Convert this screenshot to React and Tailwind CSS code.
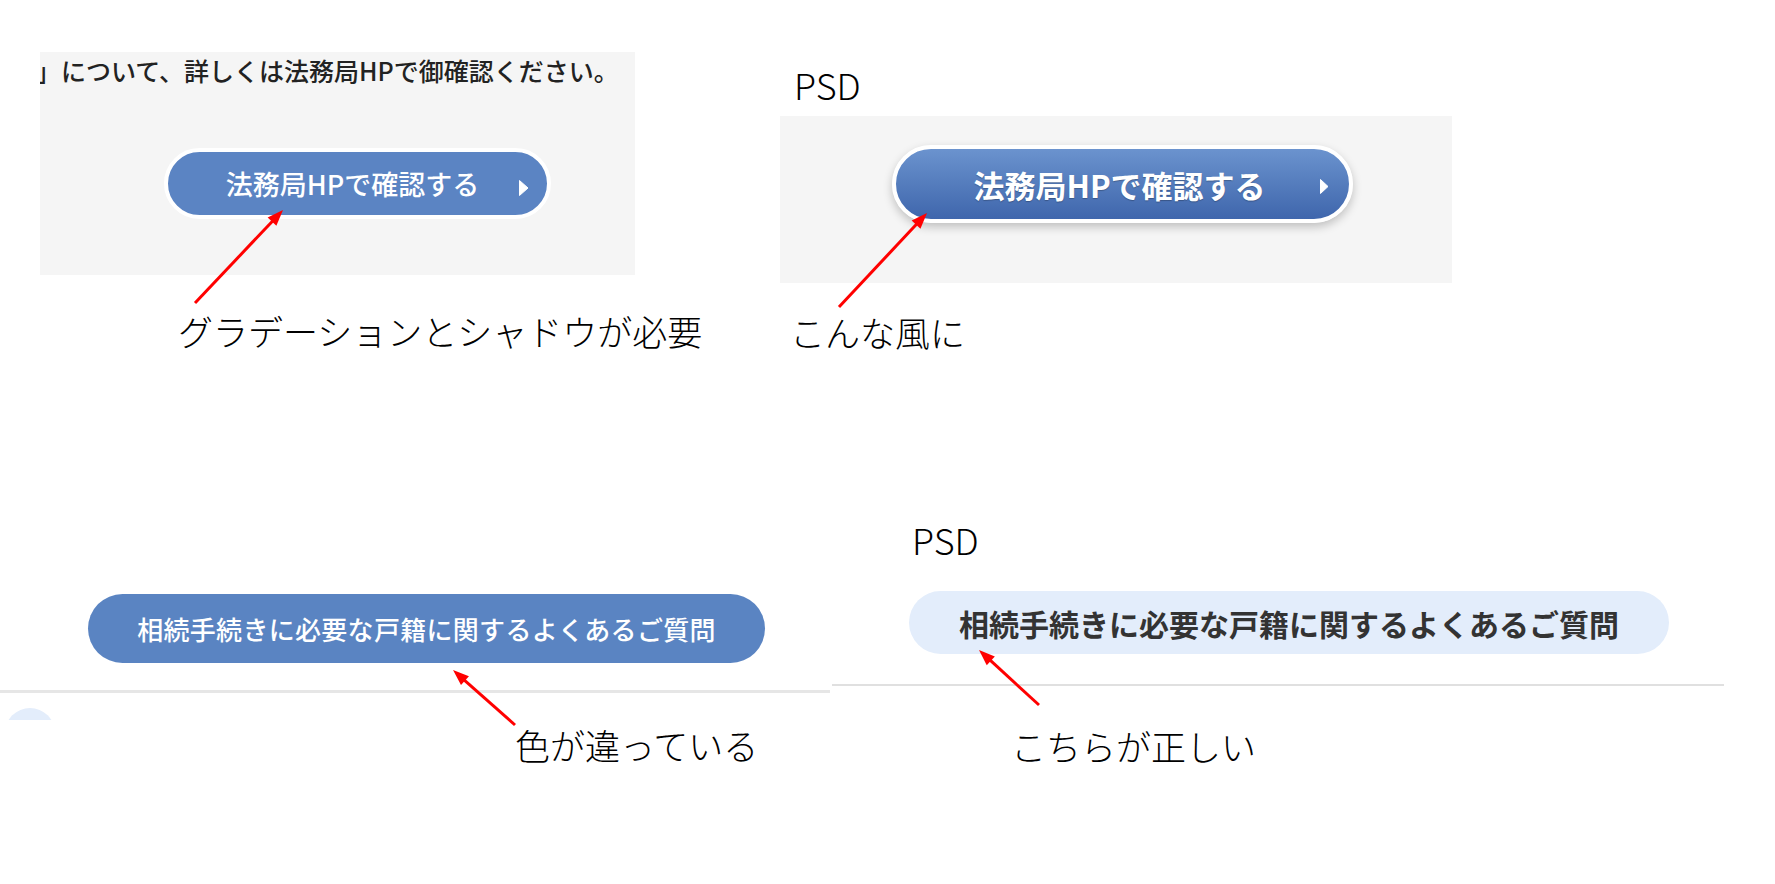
const jp = "font-['Noto_Sans_CJK_JP','Noto_Sans',sans-serif]";

function Arrow({ x1, y1, x2, y2 }) {
  const dx = x2 - x1;
  const dy = y2 - y1;
  const len = Math.hypot(dx, dy);
  const ux = dx / len;
  const uy = dy / len;
  const hl = 16;
  const hw = 6;
  const bx = x2 - ux * hl;
  const by = y2 - uy * hl;
  const pts = `${x2},${y2} ${bx - uy * hw},${by + ux * hw} ${bx + uy * hw},${by - ux * hw}`;
  return (
    <g>
      <line x1={x1} y1={y1} x2={bx + ux * 2} y2={by + uy * 2} stroke="#ff0000" strokeWidth="3" />
      <polygon points={pts} fill="#ff0000" />
    </g>
  );
}

function Caret({ w, h }) {
  return (
    <svg width={w} height={h} viewBox={`0 0 ${w} ${h}`}>
      <path d={`M0.5 0.5 L${w} ${h / 2} L0.5 ${h - 0.5} Z`} fill="white" strokeLinejoin="round" stroke="white" strokeWidth="1" />
    </svg>
  );
}

// 注釈テキスト（細いゴシック）
function Note({ className, children }) {
  return (
    <div className={`absolute whitespace-nowrap text-[35px] font-light leading-none text-black ${jp} ${className}`}>
      {children}
    </div>
  );
}

export default function App() {
  return (
    <div className={`relative h-[884px] w-[1775px] overflow-hidden bg-white ${jp}`}>
      {/* 左上：現状のスクショ */}
      <div className="absolute left-[40px] top-[52px] flex h-[223px] w-[595px] flex-col overflow-hidden bg-[#f5f5f5] pt-[6px]">
        <p className="ml-[-4px] shrink-0 whitespace-nowrap text-[25px] font-medium leading-[25px] text-[#222]">
          」について、詳しくは法務局HPで御確認ください。
        </p>
        <div className="relative ml-[124px] mt-[65px] flex h-[71px] w-[387px] shrink-0 items-center justify-center rounded-full border-4 border-white bg-[#5b84c3]">
          <span className="pr-[10px] text-[27px] font-medium leading-none text-white">法務局HPで確認する</span>
          <span className="absolute right-[19px] top-[28px] flex">
            <Caret w={9} h={16} />
          </span>
        </div>
      </div>

      {/* 右上：PSD */}
      <Note className="left-[794px] top-[66px] text-[36px]">PSD</Note>
      <div className="absolute left-[780px] top-[116px] flex h-[167px] w-[672px] flex-col bg-[#f5f5f5] pl-[112px] pt-[29px]">
        <div className="relative flex h-[78px] w-[461px] shrink-0 items-center justify-center rounded-full border-4 border-white bg-gradient-to-b from-[#6b93ce] to-[#3f66ac] shadow-[0_4px_10px_rgba(0,0,0,0.22)]">
          <span className="pr-[6px] text-[31px] font-bold leading-none text-white [text-shadow:0_1px_1px_rgba(0,0,0,0.25)]">
            法務局HPで確認する
          </span>
          <span className="absolute right-[21px] top-[30px] flex">
            <Caret w={8} h={15} />
          </span>
        </div>
      </div>

      {/* 左下：現状のスクショ */}
      <div className="absolute left-0 top-[585px] flex h-[135px] w-[830px] flex-col overflow-hidden bg-white pt-[9px]">
        <div className="ml-[88px] flex h-[69px] w-[677px] shrink-0 items-center justify-center rounded-full bg-[#5a84c2]">
          <span className="text-[26px] font-medium leading-none tracking-[0.3px] text-white">
            相続手続きに必要な戸籍に関するよくあるご質問
          </span>
        </div>
        <div className="mt-[27px] h-[3px] w-full shrink-0 bg-[#e6e6e6]" />
        <div className="ml-[5px] mt-[15px] h-[50px] w-[50px] shrink-0 rounded-full bg-[#e3edfb]" />
      </div>

      {/* 右下：PSD */}
      <Note className="left-[912px] top-[521px] text-[36px]">PSD</Note>
      <div className="absolute left-[832px] top-[591px] flex w-[892px] flex-col">
        <div className="ml-[77px] flex h-[63px] w-[760px] shrink-0 items-center justify-center rounded-full bg-[#e3edfb]">
          <span className="text-[30px] font-bold leading-none text-[#333]">
            相続手続きに必要な戸籍に関するよくあるご質問
          </span>
        </div>
        <div className="mt-[30px] h-[2px] w-full shrink-0 bg-[#e0e0e0]" />
      </div>

      {/* 注釈 */}
      <Note className="left-[178px] top-[313px]">グラデーションとシャドウが必要</Note>
      <Note className="left-[790px] top-[314px]">こんな風に</Note>
      <Note className="left-[515px] top-[727px]">色が違っている</Note>
      <Note className="left-[1011px] top-[728px]">こちらが正しい</Note>

      <svg className="pointer-events-none absolute inset-0" width="1775" height="884">
        <Arrow x1={195} y1={303} x2={283} y2={210} />
        <Arrow x1={839} y1={307} x2={927} y2={213} />
        <Arrow x1={515} y1={725} x2={453} y2={670} />
        <Arrow x1={1039} y1={705} x2={979} y2={650} />
      </svg>
    </div>
  );
}
